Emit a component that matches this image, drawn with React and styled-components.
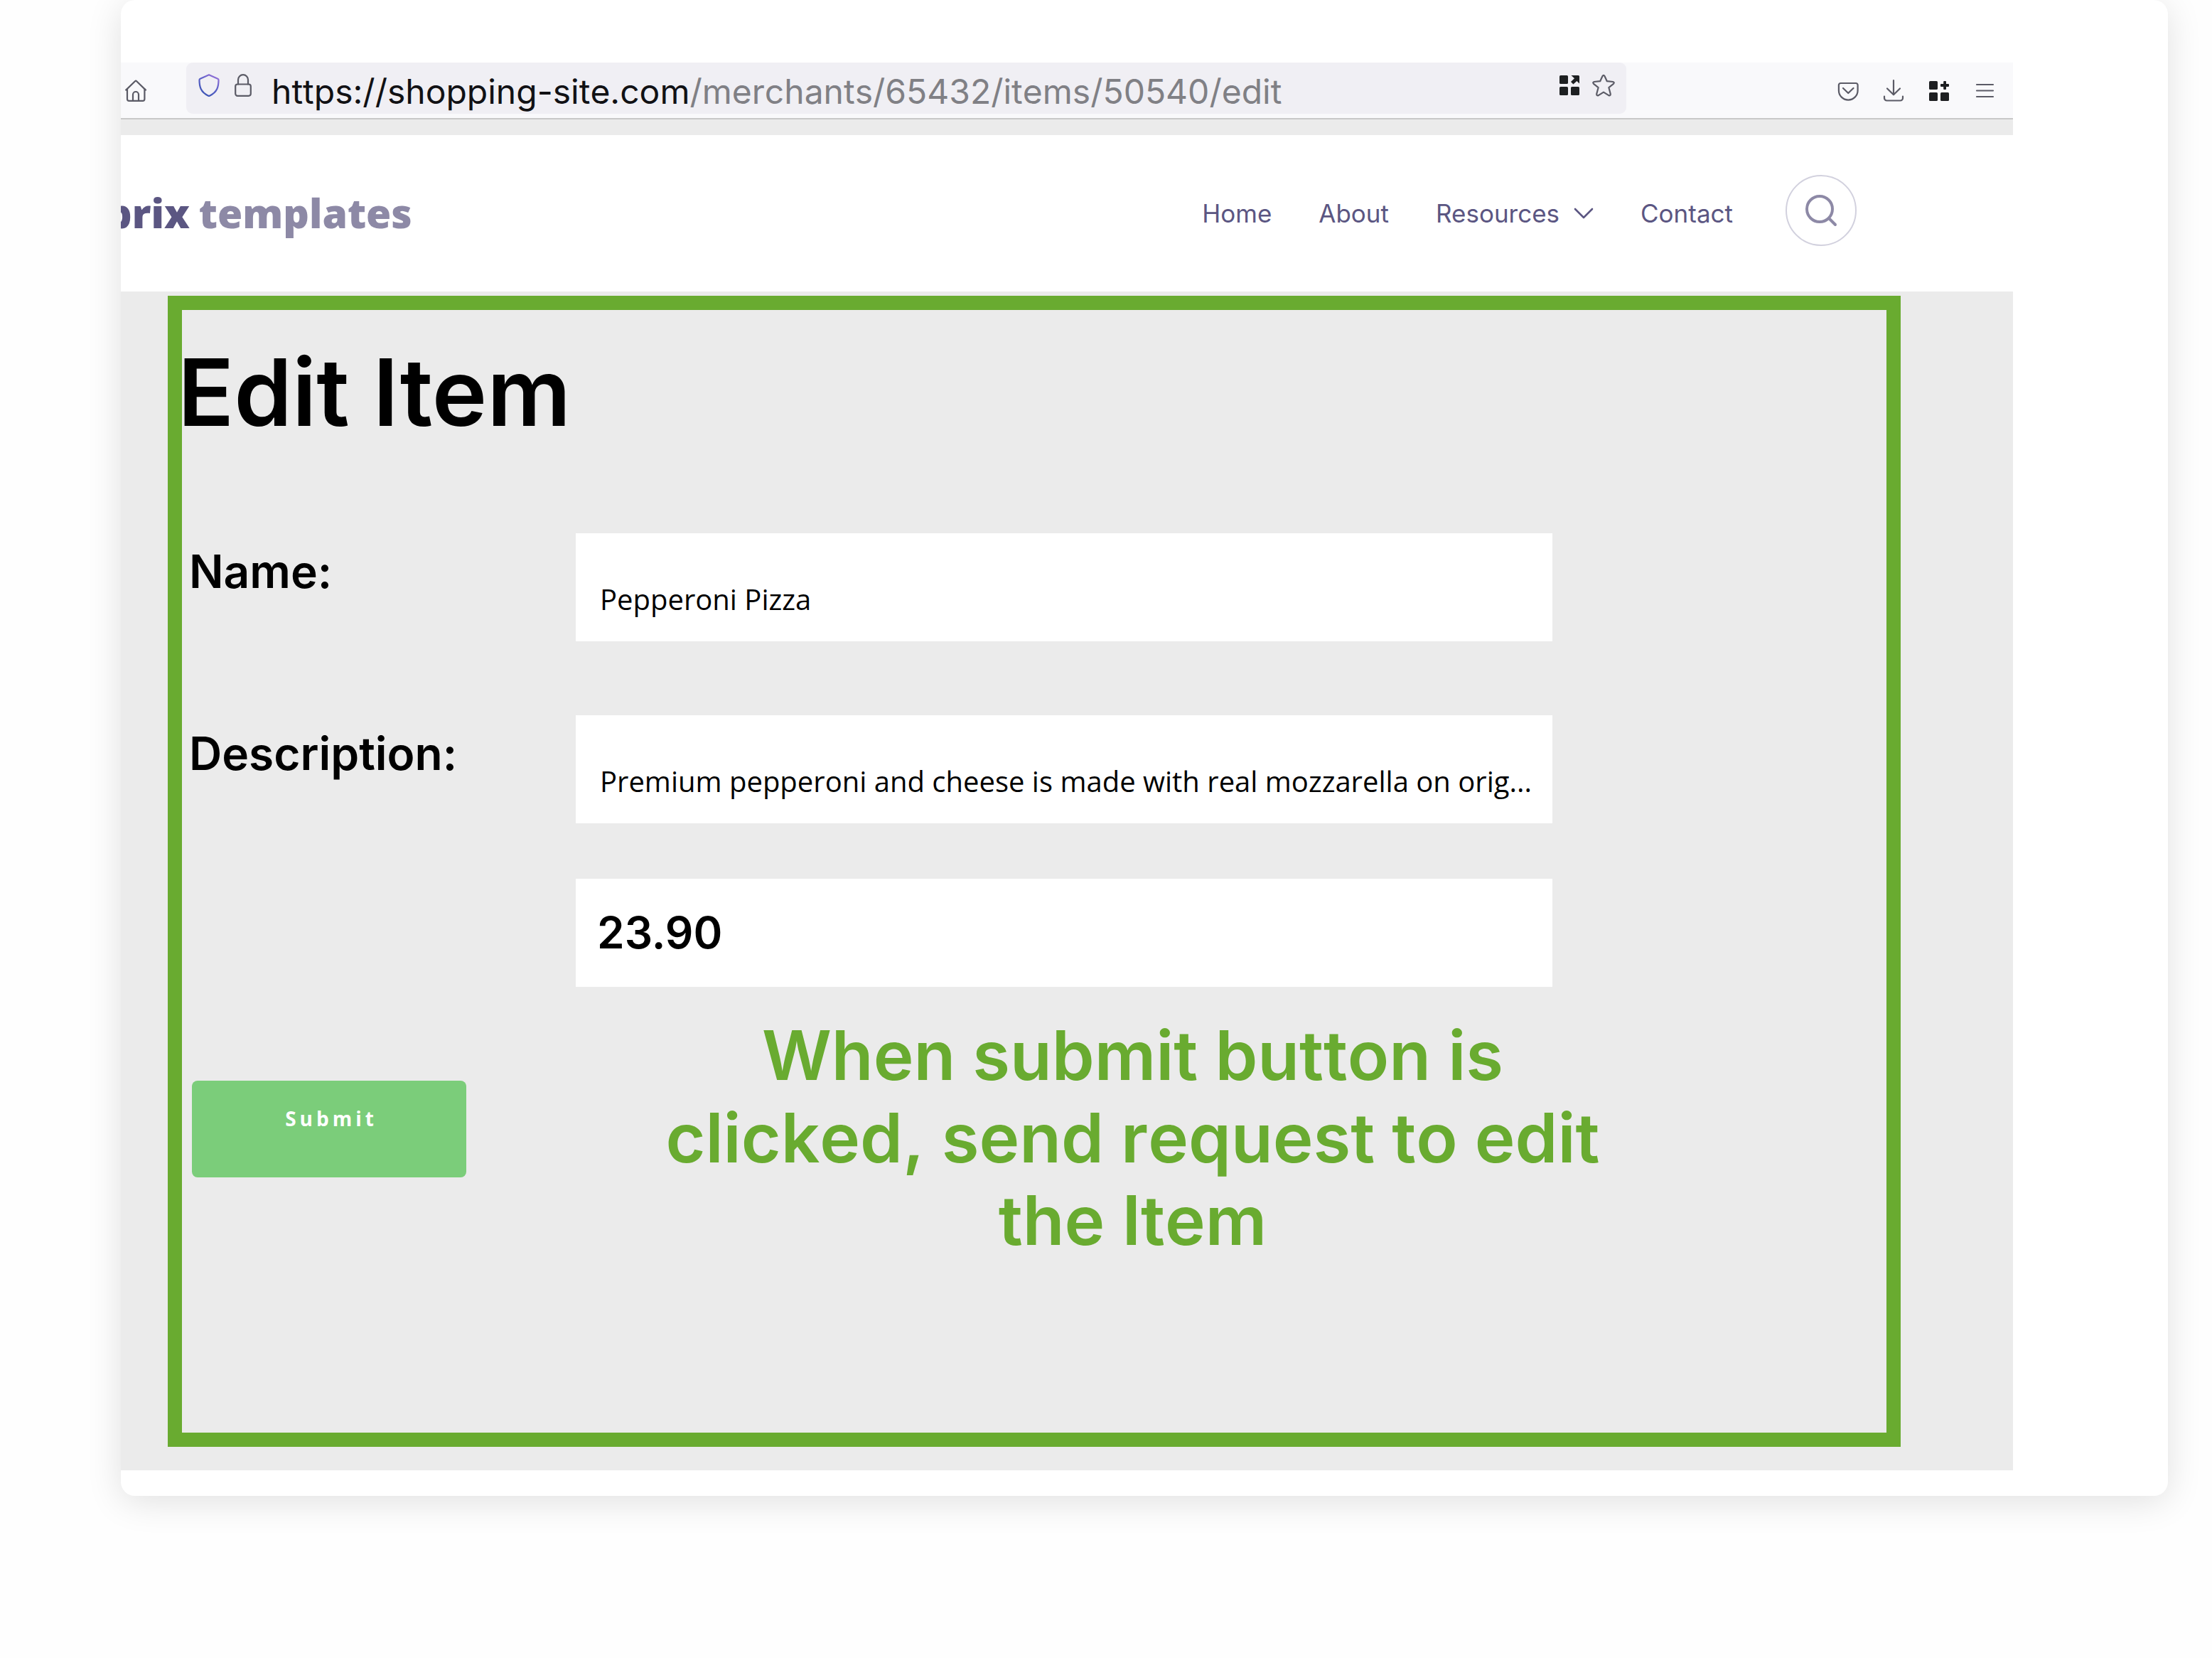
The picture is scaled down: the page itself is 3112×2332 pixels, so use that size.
import React from "react";
import styled, { createGlobalStyle } from "styled-components";

const colors = {
  ink: "#000000",
  green: "#69ab30",
  button: "#7bcd7a",
  canvas: "#ebebeb",
  toolbar: "#f9f9fb",
  urlBar: "#f0eff4",
  icon: "#5b5b66",
  solid: "#1d1f21",
  brand: "#5b5682",
  brandSoft: "#8d89a6",
};

const sans = `"Inter", "Liberation Sans", sans-serif`;
const openSans = `"Open Sans", "Noto Sans", sans-serif`;

const GlobalStyle = createGlobalStyle`
  *, *::before, *::after { box-sizing: border-box; }
  body { margin: 0; background: #fefefe; font-family: ${sans}; color: ${colors.ink}; }
`;

const Page = styled.div`
  padding: 0 62px 228px 170px;
`;

const Card = styled.section`
  padding: 88px 218px 36px 0;
  border-radius: 20px;
  background: #ffffff;
  box-shadow: 0 8px 50px rgba(0, 0, 0, 0.12);
`;

const Toolbar = styled.div`
  display: flex;
  align-items: flex-start;
  padding: 0 24px 6px 6px;
  border-bottom: 2px solid #c8c8c8;
  background: ${colors.toolbar};
`;

const IconButton = styled.button`
  display: flex;
  padding: 0;
  border: 0;
  background: none;
  color: ${(p) => p.$color || colors.icon};
  cursor: pointer;

  svg { display: block; }
`;

const ToolGroup = styled.div`
  display: flex;
  gap: 32px;
  margin-top: 24px;
`;

const UrlBar = styled.div`
  flex: 1;
  display: flex;
  align-items: flex-start;
  margin: 0 296px 0 54px;
  padding: 12px 16px 2px 17px;
  border-radius: 9px;
  background: ${colors.urlBar};
`;

const UrlIcons = styled.div`
  display: flex;
  gap: ${(p) => p.$gap};
  padding-top: 4px;
`;

const UrlText = styled.div`
  flex: 1;
  padding-left: 28px;
  font-size: 48px;
  font-kerning: none;
  font-variant-ligatures: none;
  line-height: 58px;
  white-space: nowrap;
  color: #111114;
`;

const UrlPath = styled.span`
  color: #808085;
`;

const Spacer = styled.div`
  height: 22px;
  background: ${colors.canvas};
`;

const Header = styled.header`
  display: flex;
  align-items: center;
  justify-content: space-between;
  overflow: hidden;
  padding: 56px 220px 64px 0;
  background: #ffffff;
`;

const Logo = styled.a`
  display: flex;
  gap: 13px;
  margin-left: -21px;
  padding-top: 6px;
  font: 800 57px/78px ${openSans};
  color: ${colors.brand};
  text-decoration: none;
`;

const LogoSoft = styled.span`
  color: ${colors.brandSoft};
`;

const Nav = styled.nav`
  display: flex;
  align-items: center;
  gap: 66px;
`;

const NavLink = styled.a`
  display: flex;
  align-items: center;
  gap: 20px;
  padding-top: 8px;
  font-size: 35px;
  line-height: 44px;
  color: ${colors.brand};
  text-decoration: none;
`;

const SearchButton = styled.button`
  display: flex;
  align-items: center;
  justify-content: center;
  width: 100px;
  height: 100px;
  margin-left: 8px;
  padding: 0;
  border: 2px solid #d2d1de;
  border-radius: 50%;
  background: #ffffff;
  color: ${colors.brandSoft};
`;

const Content = styled.main`
  padding: 6px 158px 33px 66px;
  background: ${colors.canvas};
`;

const EditForm = styled.form`
  padding: 36px 0 241px;
  border: 20px solid ${colors.green};
`;

const Title = styled.h1`
  margin: 0 0 118px -6px;
  font-size: 131px;
  font-weight: 600;
  line-height: 160px;
`;

const FieldRow = styled.div`
  display: grid;
  grid-template-columns: 554px 1fr;
  align-items: start;
  margin-bottom: ${(p) => p.$after};
  padding-right: 470px;
`;

const Label = styled.label`
  padding: 15px 0 0 10px;
  font-size: 64px;
  font-weight: 600;
  line-height: 78px;
`;

const TextInput = styled.input`
  grid-column: 2;
  width: 100%;
  padding: 66px 24px 32px 34px;
  border: 0;
  border-radius: 0;
  outline: 0;
  background: #ffffff;
  color: ${colors.ink};
  font: 400 40px/54px ${openSans};
`;

const PriceInput = styled(TextInput)`
  padding: 37px 24px 37px 30px;
  font: 600 62px/78px ${sans};
`;

const SubmitRow = styled.div`
  display: grid;
  grid-template-columns: 644px 1fr;
  align-items: start;
  padding-right: 367px;
`;

const SubmitButton = styled.button`
  justify-self: start;
  width: 386px;
  margin: 94px 0 0 14px;
  padding: 34px 0 64px 6px;
  border: 0;
  border-radius: 8px;
  background: ${colors.button};
  color: #ffffff;
  font: 700 28px/38px ${openSans};
  letter-spacing: 5px;
`;

const Note = styled.p`
  margin: 0;
  font-size: 96px;
  font-weight: 600;
  font-kerning: none;
  font-variant-ligatures: none;
  line-height: 116px;
  text-align: center;
  color: ${colors.green};
`;

const stroke = {
  fill: "none",
  stroke: "currentColor",
  strokeWidth: 2.2,
  strokeLinecap: "round",
  strokeLinejoin: "round",
};

const HomeIcon = () => (
  <svg width="32" height="32" viewBox="0 0 32 32" {...stroke}>
    <path d="M1.2 14.6 14 2.2a1.6 1.6 0 0 1 2.2 0L29 14.6" />
    <path d="M3 13v14.2A2.6 2.6 0 0 0 5.600 29.800H24.800A2.600 2.600 0 0 0 27.400 27.200V13" />
    <path d="M11 29.500V21a4 4 0 0 1 8 0v8.500" />
  </svg>
);

const ShieldIcon = () => (
  <svg width="30" height="32" viewBox="0 0 30 32" {...stroke} stroke="url(#shield)">
    <defs>
      <linearGradient id="shield" x1="0.9" y1="0" x2="0.3" y2="1">
        <stop offset="0" stopColor="#9a72d8" />
        <stop offset="0.5" stopColor="#5b60c8" />
        <stop offset="1" stopColor="#3d55b4" />
      </linearGradient>
    </defs>
    <path d="M15 1.200 27.300 6.800A1.800 1.800 0 0 1 28.500 8.600C28.500 17.500 27 25.500 15.900 30.700a2 2 0 0 1-1.800 0C3 25.500 1.500 17.500 1.500 8.600A1.800 1.800 0 0 1 2.700 6.800Z" />
  </svg>
);

const LockIcon = () => (
  <svg width="24" height="32" viewBox="0 0 24 32" {...stroke}>
    <path d="M5 14.500V8.200a7 7 0 0 1 14 0v6.300" />
    <rect x="1.200" y="14.500" width="21.600" height="16.300" rx="3" />
  </svg>
);

const AppsOpenIcon = () => (
  <svg width="28" height="32" viewBox="0 0 28 32" fill="currentColor">
    <rect x="0" y="2" width="12" height="12" rx="1.600" />
    <rect x="0" y="18" width="12" height="12" rx="1.600" />
    <rect x="16" y="18" width="12" height="12" rx="1.600" />
    <path d="M16.500 2H26.500A1.500 1.500 0 0 1 28 3.500V13.500L24.400 10 19.400 14.500 16 11 21 6.300Z" />
  </svg>
);

const StarIcon = () => (
  <svg width="32" height="32" viewBox="0 0 32 32" {...stroke}>
    <path d="M14.500 3Q16 .6 17.500 3L20.800 10.200 29.200 11Q31.800 11.700 30 13.800L23.400 19.200 25.800 28.200Q25.800 31 23.200 30.100L16 25.600 8.800 30.100Q6.200 31 6.200 28.200L8.600 19.200 2 13.800Q.2 11.700 2.800 11L11.200 10.200Z" />
  </svg>
);

const PocketIcon = () => (
  <svg width="32" height="32" viewBox="0 0 32 32" {...stroke}>
    <path d="M5.500 5H27a2.600 2.600 0 0 1 2.600 2.600V15.200a13.350 13.350 0 0 1-26.700 0V7.600A2.600 2.600 0 0 1 5.500 5Z" />
    <path d="M9 12l7.250 7L23.500 12" />
  </svg>
);

const DownloadIcon = () => (
  <svg width="32" height="32" viewBox="0 0 32 32" {...stroke}>
    <path d="M16 1.200V21M7 12.500l9 8.800 9-8.800" />
    <path d="M3 23.500V26a3.500 3.500 0 0 0 3.500 3.500H25.500A3.500 3.500 0 0 0 29 26V23.500" />
  </svg>
);

const AppsAddIcon = () => (
  <svg width="32" height="32" viewBox="0 0 32 32" fill="currentColor">
    <rect x="2" y="2" width="12" height="12" rx="1.600" />
    <rect x="2" y="18" width="12" height="12" rx="1.600" />
    <rect x="18" y="18" width="12" height="12" rx="1.600" />
    <rect x="22.200" y="2" width="3.800" height="12" rx="1" />
    <rect x="18" y="6.100" width="12" height="3.800" rx="1" />
  </svg>
);

const MenuIcon = () => (
  <svg width="32" height="32" viewBox="0 0 32 32" {...stroke}>
    <path d="M5 7H28M5 15.500H28M5 24H28" />
  </svg>
);

const ChevronIcon = () => (
  <svg width="28" height="16" viewBox="0 0 28 16" {...stroke} strokeWidth="2.600">
    <path d="M2 2l12 12L26 2" />
  </svg>
);

const SearchIcon = () => (
  <svg width="46" height="46" viewBox="0 0 46 46" {...stroke} strokeWidth="4">
    <circle cx="21" cy="21" r="18" />
    <path d="M35 35l8 8" />
  </svg>
);

export default function App() {
  return (
    <>
      <GlobalStyle />
      <Page>
        <Card>
          <Toolbar>
            <ToolGroup>
              <IconButton type="button" aria-label="Home page"><HomeIcon /></IconButton>
            </ToolGroup>
            <UrlBar>
              <UrlIcons $gap="21px">
                <IconButton type="button" aria-label="Tracking protection"><ShieldIcon /></IconButton>
                <IconButton type="button" aria-label="Site information"><LockIcon /></IconButton>
              </UrlIcons>
              <UrlText role="textbox" aria-label="Address">
                https://shopping-site.com<UrlPath>/merchants/65432/items/50540/edit</UrlPath>
              </UrlText>
              <UrlIcons $gap="18px">
                <IconButton type="button" aria-label="Open in app" $color={colors.solid}><AppsOpenIcon /></IconButton>
                <IconButton type="button" aria-label="Bookmark"><StarIcon /></IconButton>
              </UrlIcons>
            </UrlBar>
            <ToolGroup>
              <IconButton type="button" aria-label="Save to Pocket"><PocketIcon /></IconButton>
              <IconButton type="button" aria-label="Downloads"><DownloadIcon /></IconButton>
              <IconButton type="button" aria-label="Extensions" $color={colors.solid}><AppsAddIcon /></IconButton>
              <IconButton type="button" aria-label="Menu"><MenuIcon /></IconButton>
            </ToolGroup>
          </Toolbar>
          <Spacer />
          <Header>
            <Logo href="#home">
              <span>brix</span>
              <LogoSoft>templates</LogoSoft>
            </Logo>
            <Nav>
              <NavLink href="#home">Home</NavLink>
              <NavLink href="#about">About</NavLink>
              <NavLink href="#resources">Resources<ChevronIcon /></NavLink>
              <NavLink href="#contact">Contact</NavLink>
              <SearchButton type="button" aria-label="Search"><SearchIcon /></SearchButton>
            </Nav>
          </Header>
          <Content>
            <EditForm onSubmit={(e) => e.preventDefault()}>
              <Title>Edit Item</Title>
              <FieldRow $after="104px">
                <Label htmlFor="name">Name:</Label>
                <TextInput id="name" type="text" defaultValue="Pepperoni Pizza" />
              </FieldRow>
              <FieldRow $after="78px">
                <Label htmlFor="description">Description:</Label>
                <TextInput
                  id="description"
                  type="text"
                  defaultValue="Premium pepperoni and cheese is made with real mozzarella on orig..."
                />
              </FieldRow>
              <FieldRow $after="38px">
                <PriceInput aria-label="Price" type="text" defaultValue="23.90" />
              </FieldRow>
              <SubmitRow>
                <SubmitButton type="submit">Submit</SubmitButton>
                <Note>When submit button is clicked, send request to edit the Item</Note>
              </SubmitRow>
            </EditForm>
          </Content>
        </Card>
      </Page>
    </>
  );
}
